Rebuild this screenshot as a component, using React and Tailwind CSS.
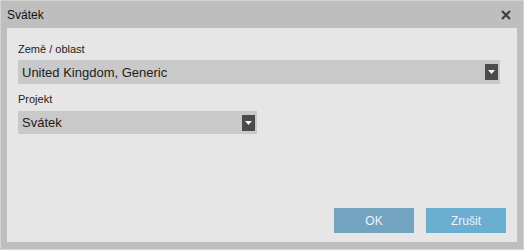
import React from 'react';

function Select({ value, width }) {
    return (
        <div className={`flex items-center justify-between bg-[#c9c9c9] ${width}`}>
            <span className="pl-[4px] text-[13px] leading-none text-[#1b1b1b]">{value}</span>
            <div className="mr-[2px] flex h-[16px] w-[13px] items-center justify-center bg-[#4b4b4b]">
                <svg width="7" height="4" viewBox="0 0 7 4">
                    <path d="M0 0 H7 L3.5 4 Z" fill="#f4f4f4" />
                </svg>
            </div>
        </div>
    );
}

export default function App() {
    return (
        <div className="flex h-[250px] w-[524px] flex-col border border-[#d4d4d4] bg-[#bebebe] font-['Liberation_Sans',Arial,sans-serif]">
            {/* title bar */}
            <div className="flex h-[27px] items-center justify-between pl-[6px] pr-[12px]">
                <span className="text-[12px] text-[#111]">Svátek</span>
                <svg width="10" height="10" viewBox="0 0 10 10">
                    <path d="M1 1 L9 9 M9 1 L1 9" stroke="#3f3f3f" strokeWidth="2.2" />
                </svg>
            </div>

            <div className="mx-[6px] mb-[7px] flex flex-1 flex-col bg-[#e6e6e6] pl-[11px] pr-[11px] pt-[14px] pb-[9px]">
                <label className="text-[11px] leading-[14px] text-[#222]">Země / oblast</label>
                <div className="mt-[4px]">
                    <Select value="United Kingdom, Generic" width="h-[24px] w-[482px]" />
                </div>
                <label className="mt-[8px] text-[11px] leading-[14px] text-[#222]">Projekt</label>
                <div className="mt-[5px]">
                    <Select value="Svátek" width="h-[23px] w-[239px]" />
                </div>

                <div className="mt-auto flex justify-end gap-[12px]">
                    <button className="h-[25px] w-[80px] bg-[#72a3bf] text-[12px] text-[#eef4f8]">OK</button>
                    <button className="h-[25px] w-[80px] bg-[#6aaed0] text-[12px] text-[#eef4f8]">Zrušit</button>
                </div>
            </div>
        </div>
    );
}
